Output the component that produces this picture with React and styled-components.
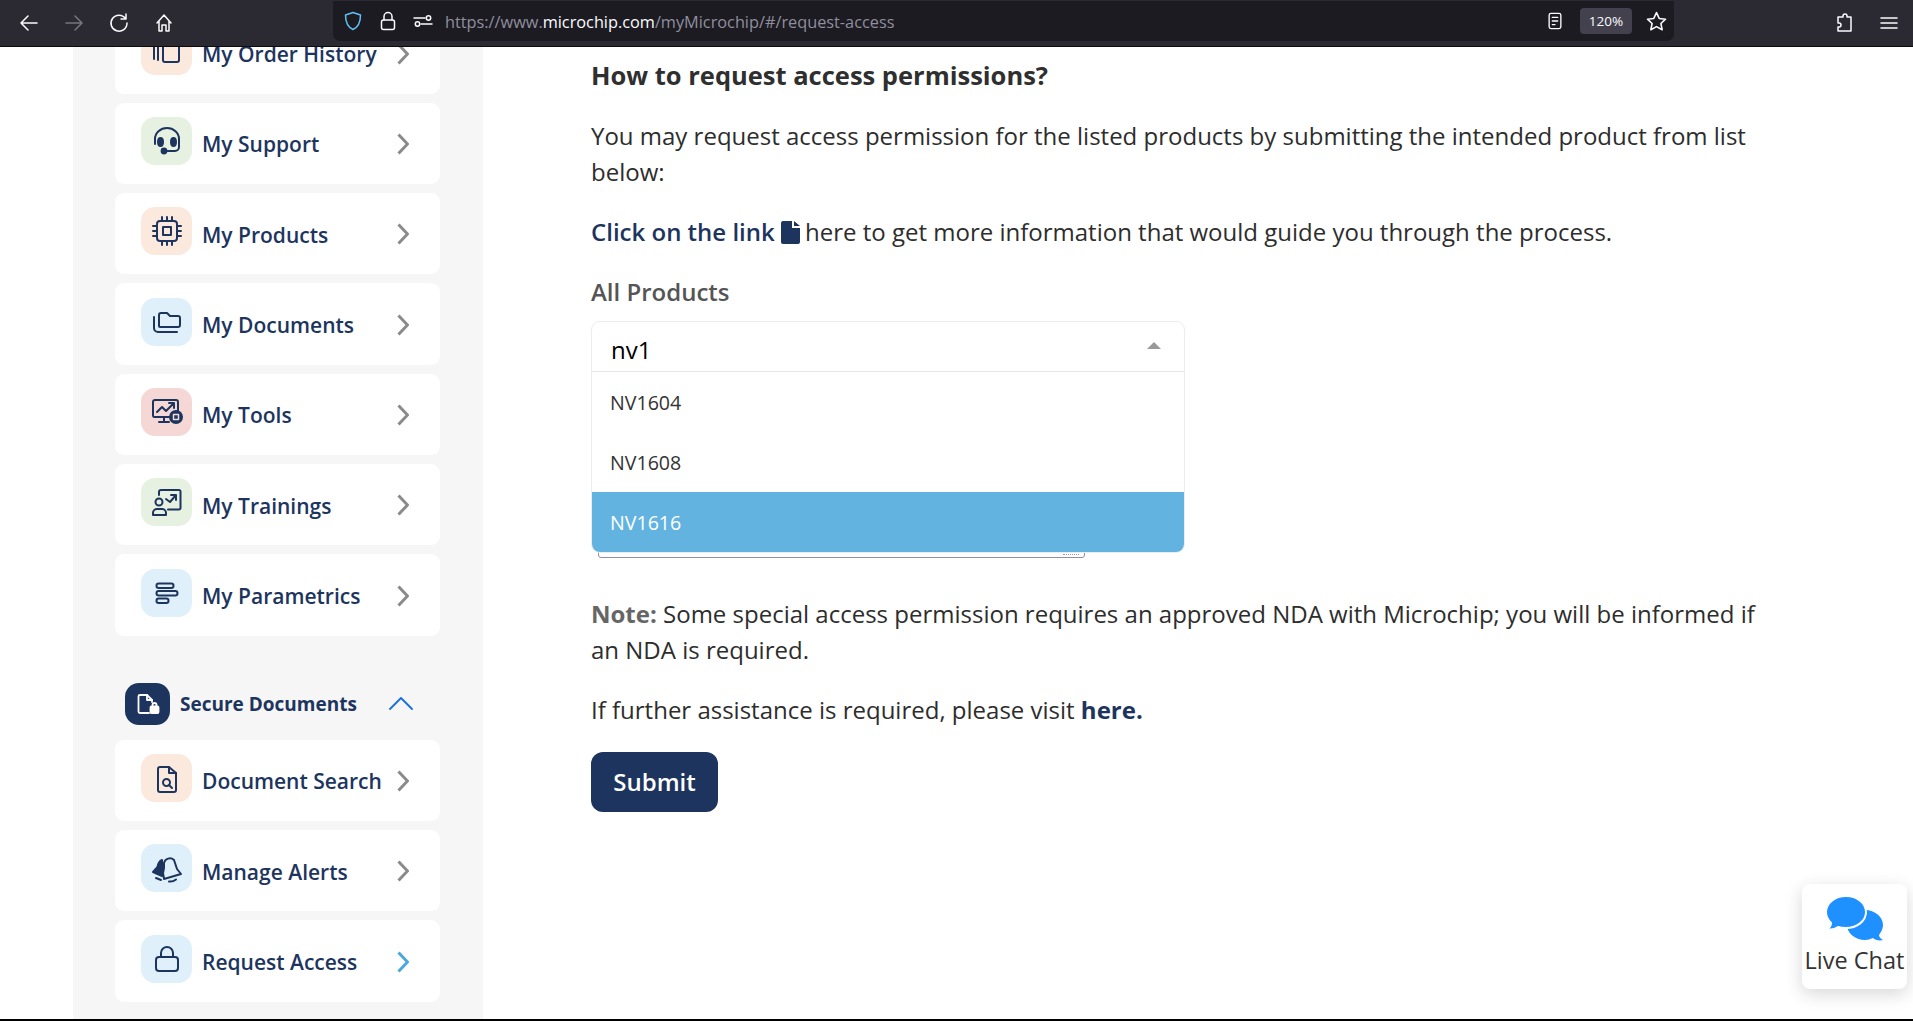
import React from 'react';
import styled, { createGlobalStyle } from 'styled-components';

const navy = '#1d355e';

const GlobalStyle = createGlobalStyle`
  html, body {
    margin: 0;
    padding: 0;
    height: 100%;
    overflow: hidden;
    background: #fff;
    font-family: "Open Sans", "Noto Sans", sans-serif;
  }
`;

const Frame = styled.div`
  display: flex;
  flex-direction: column;
  height: 1021px;
  position: relative;
  overflow: hidden;
`;

const Toolbar = styled.header`
  flex: none;
  height: 46px;
  border-bottom: 1px solid #0c0c0d;
  background: #2b2a33;
  display: flex;
  align-items: center;
  color: #fbfbfe;
`;

const NavButtons = styled.div`
  width: 333px;
  flex: none;
  display: flex;
  align-items: center;
  padding-left: 19px;
  gap: 25px;
  box-sizing: border-box;
`;

const UrlBar = styled.div`
  width: 1341px;
  height: 40px;
  margin-bottom: 4px;
  flex: none;
  background: #1c1b22;
  border-radius: 0 0 7px 7px;
  display: flex;
  align-items: center;
  padding: 0 7px 0 10px;
  box-sizing: border-box;
`;

const UrlGap = styled.span`
  width: 15px;
  flex: none;
`;

const UrlText = styled.div`
  flex: 1;
  margin-left: 12px;
  padding-top: 2px;
  font: 16.3px "Open Sans", sans-serif;
  color: #8f8f9d;
  white-space: nowrap;
  b {
    font-weight: 400;
    color: #fbfbfe;
  }
`;

const Zoom = styled.span`
  width: 52px;
  height: 26px;
  border-radius: 4px;
  background: #42414d;
  color: #fbfbfe;
  font: 13.5px "Open Sans", sans-serif;
  display: flex;
  align-items: center;
  justify-content: center;
  margin: 0 14px 0 16px;
`;

const RightTools = styled.div`
  flex: 1;
  display: flex;
  align-items: center;
  gap: 24px;
  padding-left: 161px;
`;

const Page = styled.div`
  flex: 1;
  min-height: 0;
  display: flex;
  overflow: hidden;
  border-bottom: 2px solid #000;
`;

const Sidebar = styled.aside`
  flex: none;
  width: 410px;
  margin-left: 73px;
  margin-top: -34.5px;
  padding: 0 43px 0 42px;
  box-sizing: border-box;
  background: #f6f6f6;
`;

const MenuList = styled.nav`
  display: flex;
  flex-direction: column;
  gap: 9px;
`;

const MenuCard = styled.a`
  height: 81.33px;
  border-radius: 9px;
  background: #fff;
  display: grid;
  grid-template-columns: 51px 1fr 12px;
  column-gap: 11px;
  padding: 0 31px 0 26px;
  box-sizing: border-box;
  align-items: center;
  color: ${navy};
`;

const Tile = styled.span`
  width: 51px;
  height: 48px;
  border-radius: 14px;
  background: ${p => p.$bg};
  display: flex;
  align-items: center;
  justify-content: center;
  margin-bottom: 5px;
`;

const MenuLabel = styled.span`
  font-size: 21px;
  font-weight: 600;
  white-space: nowrap;
  line-height: 28px;
  padding-top: 2px;
  margin-left: -1px;
`;

const Chevron = styled.svg`
  width: 12px;
  height: 22px;
  fill: none;
  stroke: ${p => (p.$active ? '#4aa8de' : '#8a8a8a')};
  stroke-width: 3;
  margin-top: 1px;
`;

const SectionHead = styled.div`
  display: flex;
  align-items: center;
  margin: 47px 0 15px 10px;
  height: 42px;
  color: ${navy};
`;

const SectionIcon = styled.span`
  width: 45px;
  height: 42px;
  border-radius: 14px;
  background: ${navy};
  display: flex;
  align-items: center;
  justify-content: center;
`;

const SectionTitle = styled.span`
  margin-left: 10px;
  font-size: 19px;
  font-weight: 700;
  white-space: nowrap;
  width: 209px;
`;

const Main = styled.main`
  flex: 1;
  min-width: 0;
  padding: 10px 0 0 108px;
  color: #2d2d2d;
  font-size: 24px;
  line-height: 36px;
`;

const Heading = styled.h2`
  margin: 0 0 25px;
  font-size: 25.5px;
  line-height: 36px;
  font-weight: 700;
  color: #2f2f2f;
`;

const Para = styled.p`
  margin: 0 0 ${p => p.$after || 24}px;
  width: 1190px;
  strong {
    color: ${navy};
    font-weight: ${p => p.$linkWeight || 700};
  }
  em {
    color: #666;
    font-style: normal;
    font-weight: 700;
  }
`;

const FieldLabel = styled.div`
  font-weight: 600;
  color: #555;
  margin-bottom: 11px;
`;

const SelectField = styled.div`
  position: relative;
  height: 236px;
  margin-bottom: 39px;
`;

const HiddenInput = styled.div`
  position: absolute;
  left: 7px;
  bottom: -1px;
  width: 487px;
  height: 40px;
  border: 1px solid #8f8f9d;
  border-radius: 3px;
  box-sizing: border-box;
  &::after {
    content: '';
    position: absolute;
    right: 5px;
    bottom: 2px;
    width: 16px;
    border-bottom: 1px dotted #999;
  }
`;

const Dropdown = styled.div`
  position: absolute;
  top: 0;
  left: 0;
  width: 594px;
  box-sizing: border-box;
  border: 1px solid #ececec;
  border-radius: 9px;
  background: #fff;
  overflow: hidden;
`;

const SearchRow = styled.div`
  height: 50px;
  padding: 7px 23px 0 19px;
  box-sizing: border-box;
  border-bottom: 1px solid #e6e6e6;
  display: flex;
  align-items: center;
  justify-content: space-between;
  color: #000;
  font-size: 24px;
`;

const Caret = styled.span`
  width: 0;
  height: 0;
  border-left: 7px solid transparent;
  border-right: 7px solid transparent;
  border-bottom: 7px solid #999;
  margin-bottom: 9px;
`;

const Option = styled.div`
  height: 60px;
  padding: 2px 0 0 18px;
  box-sizing: border-box;
  display: flex;
  align-items: center;
  font-size: 19.6px;
  color: ${p => (p.$selected ? '#fff' : '#333')};
  background: ${p => (p.$selected ? '#63b3e1' : '#fff')};
`;

const SubmitButton = styled.button`
  display: block;
  width: 127px;
  height: 60px;
  padding: 0 0 2px;
  border: 0;
  border-radius: 12px;
  background: ${navy};
  color: #fff;
  font: 600 24px "Open Sans", sans-serif;
`;

const ChatWidget = styled.div`
  position: absolute;
  left: 1802px;
  top: 884px;
  width: 105px;
  height: 105px;
  background: #fff;
  border-radius: 8px;
  box-shadow: 0 5px 18px rgba(0, 0, 0, 0.16);
  display: flex;
  flex-direction: column;
  align-items: center;
  color: #333;
  font-size: 23.5px;
  line-height: 32px;
  white-space: nowrap;
`;

const ChatBubbles = styled.svg`
  display: block;
  flex: none;
  margin-top: 10px;
`;

const Glyph = styled.svg`
  display: block;
  flex: none;
  fill: none;
  stroke: ${p => p.$stroke || navy};
  stroke-width: ${p => p.$w || 2};
  stroke-linecap: round;
  stroke-linejoin: round;
`;

const InlineFile = styled.svg`
  display: inline-block;
  vertical-align: -3px;
  margin: 0 5px 0 0;
`;

const Icon = ({ size = 32, children, stroke, w, view = 32 }) => (
  <Glyph width={size} height={size} viewBox={`0 0 ${view} ${view}`} $stroke={stroke} $w={w}>
    {children}
  </Glyph>
);

const TB = ({ size = 20, children, stroke = '#fbfbfe', w = 1.5 }) => (
  <Icon size={size} view={20} stroke={stroke} w={w}>
    {children}
  </Icon>
);

const icons = {
  history: (
    <Icon>
      <path d="M3 5v19M7 5v20" />
      <rect x="12" y="5" width="16" height="22" rx="2" />
    </Icon>
  ),
  support: (
    <Icon>
      <path d="M4 19v-5a12 11 0 0 1 24 0v8a4 4 0 0 1-4 4h-9" />
      <ellipse cx="9.5" cy="17" rx="2.5" ry="4" fill={navy} />
      <ellipse cx="22.5" cy="17" rx="2.5" ry="4" fill={navy} />
      <circle cx="13" cy="26" r="2.4" fill={navy} />
    </Icon>
  ),
  chip: (
    <Icon>
      <rect x="6" y="6" width="20" height="20" rx="3" />
      <rect x="12" y="12" width="8" height="8" />
      <path d="M11 2v4M16 2v4M21 2v4M11 26v4M16 26v4M21 26v4M2 11h4M2 16h4M2 21h4M26 11h4M26 16h4M26 21h4" />
    </Icon>
  ),
  folder: (
    <Icon>
      <path d="M8 20V9a2 2 0 0 1 2-2h6l3 3h8a2 2 0 0 1 2 2v7a2 2 0 0 1-2 2H9a1 1 0 0 1-1-1z" />
      <path d="M3 11v11a4 4 0 0 0 4 4h19" />
    </Icon>
  ),
  tools: (
    <Icon>
      <path d="M21 21H3a1.5 1.5 0 0 1-1-1.500V6a2 2 0 0 1 2-2h21a2 2 0 0 1 2 2v9" />
      <path d="M13 21v5M8 26h10" />
      <path d="M6 16l5-5 4 4 7-7M18 7h5v5" />
      <circle cx="25" cy="21" r="6" fill={navy} />
      <rect x="22.500" y="18.500" width="5" height="5" stroke="#f5d8d5" strokeWidth="1.500" />
    </Icon>
  ),
  training: (
    <Icon>
      <circle cx="8" cy="16" r="3.500" />
      <path d="M2 29v-2a4 4 0 0 1 4-4h5a4 4 0 0 1 4 4v2z" />
      <path d="M8 9V6a2 2 0 0 1 2-2h18a1.500 1.500 0 0 1 1.500 1.500V22a1.500 1.500 0 0 1-1.500 1.500H17" />
      <path d="M15 13l4 3 6-7M20 9h5v5" />
    </Icon>
  ),
  params: (
    <Icon>
      <rect x="5.500" y="6.500" width="17" height="4.500" rx="2.200" />
      <rect x="5.500" y="14" width="21" height="4.500" rx="2.200" />
      <rect x="5.500" y="21.500" width="12" height="4.500" rx="2.200" />
    </Icon>
  ),
  docSearch: (
    <Icon>
      <path d="M9 5h9l7 6v17a2 2 0 0 1-2 2H9a2 2 0 0 1-2-2V7a2 2 0 0 1 2-2z" />
      <path d="M18 5v6h7" />
      <circle cx="15.500" cy="20.500" r="3.500" />
      <path d="M18 23l3 3" />
    </Icon>
  ),
  alerts: (
    <Icon>
      <path d="M11 8C8 9 7 12 6.500 15L2 20l9 4z" fill={navy} />
      <path d="M5 26l5 2" />
      <path d="M13 11a6 6 0 0 1 10-3l3 9 4 5-17 5-1-6 1-5z" fill="#dff0fa" />
      <path d="M18 29.500q4 .5 7-2" />
    </Icon>
  ),
  lock: (
    <Icon>
      <rect x="5" y="14" width="22" height="14" rx="3" />
      <path d="M10 14V10a6 6 0 0 1 12 0v4" />
    </Icon>
  ),
};

const mainItems = [
  { label: 'My Order History', icon: 'history', bg: '#fbe9dd' },
  { label: 'My Support', icon: 'support', bg: '#e7f1e1' },
  { label: 'My Products', icon: 'chip', bg: '#fbe9dd' },
  { label: 'My Documents', icon: 'folder', bg: '#dff0fa' },
  { label: 'My Tools', icon: 'tools', bg: '#f5d8d5' },
  { label: 'My Trainings', icon: 'training', bg: '#e7f1e1' },
  { label: 'My Parametrics', icon: 'params', bg: '#dff0fa' },
];

const secureItems = [
  { label: 'Document Search', icon: 'docSearch', bg: '#fbe9dd' },
  { label: 'Manage Alerts', icon: 'alerts', bg: '#dff0fa' },
  { label: 'Request Access', icon: 'lock', bg: '#dff0fa', active: true },
];

const MenuItem = ({ item }) => (
  <MenuCard>
    <Tile $bg={item.bg}>{icons[item.icon]}</Tile>
    <MenuLabel>{item.label}</MenuLabel>
    <Chevron viewBox="0 0 12 22" $active={item.active}>
      <path d="M1.500 1.500L10.500 11L1.500 20.500" />
    </Chevron>
  </MenuCard>
);

const App = () => (
  <Frame>
    <GlobalStyle />
    <Toolbar>
      <NavButtons>
        <TB>
          <path d="M18 10H2M9 3l-7 7 7 7" />
        </TB>
        <TB stroke="#77767e">
          <path d="M2 10h16M11 3l7 7-7 7" />
        </TB>
        <TB>
          <path d="M16.500 5.500A8 8 0 1 0 18 10M17 1v5h-5" />
        </TB>
        <TB>
          <path d="M3 10l7-8 7 8M5 8v10h3v-6h4v6h3V8" />
        </TB>
      </NavButtons>
      <UrlBar>
        <TB size={20} stroke="#5dc1f5">
          <path d="M10 1.500l7.500 2.500c0 7-2 12-7.500 14.500C4.500 16 2.500 11 2.500 4z" />
        </TB>
        <UrlGap />
        <TB size={20}>
          <rect x="3.500" y="9" width="13" height="9.500" rx="2" />
          <path d="M6 9V5.500a4 4 0 0 1 8 0V9" />
        </TB>
        <UrlGap />
        <TB size={20}>
          <path d="M1 7h11M8 13h11" />
          <circle cx="15.500" cy="7" r="2.200" />
          <circle cx="4.500" cy="13" r="2.200" />
        </TB>
        <UrlText>
          https://www.<b>microchip.com</b>/myMicrochip/#/request-access
        </UrlText>
        <TB size={18}>
          <rect x="3.500" y="1.500" width="13" height="17" rx="2" />
          <path d="M7 6h6M7 10h6M7 14h3" />
        </TB>
        <Zoom>120%</Zoom>
        <TB size={21}>
          <path d="M10 1.500l2.600 5.600 6 .7-4.400 4.100 1.200 6-5.400-3-5.400 3 1.200-6L1.400 7.800l6-.7z" />
        </TB>
      </UrlBar>
      <RightTools>
        <TB size={20}>
          <path d="M3 4h5V3a2 2 0 0 1 4 0v1h4v14H3v-4h1a2 2 0 0 0 0-4H3z" />
        </TB>
        <TB size={20}>
          <path d="M2 5h16M2 10h16M2 15h16" />
        </TB>
      </RightTools>
    </Toolbar>
    <Page>
      <Sidebar>
        <MenuList>
          {mainItems.map(item => (
            <MenuItem key={item.label} item={item} />
          ))}
        </MenuList>
        <SectionHead>
          <SectionIcon>
            <Icon size={30} view={30} stroke="#fff" w={1.800}>
              <path d="M16 24H7a1.500 1.500 0 0 1-1.500-1.500v-15A1.500 1.500 0 0 1 7 6h7l5 5v2" />
              <path d="M14 6v5h5" />
              <rect x="17.500" y="17.500" width="8" height="6.500" rx="1" fill="#fff" />
              <path d="M19.500 17.500V16a2 2 0 0 1 4 0v1.500" />
            </Icon>
          </SectionIcon>
          <SectionTitle>Secure Documents</SectionTitle>
          <Icon size={24} view={24} stroke="#1a6fe0" w={1.800}>
            <path d="M1 17L12 6l11 11" />
          </Icon>
        </SectionHead>
        <MenuList>
          {secureItems.map(item => (
            <MenuItem key={item.label} item={item} />
          ))}
        </MenuList>
      </Sidebar>
      <Main>
        <Heading>How to request access permissions?</Heading>
        <Para>
          You may request access permission for the listed products by submitting the intended
          product from list below:
        </Para>
        <Para $linkWeight={600}>
          <strong>Click on the link </strong>
          <InlineFile width="19" height="23" viewBox="0 0 19 23">
            <path
              d="M2 0h9v7h8v14a2 2 0 0 1-2 2H2a2 2 0 0 1-2-2V2a2 2 0 0 1 2-2zM13 0l6 5h-6z"
              fill={navy}
            />
          </InlineFile>
          here to get more information that would guide you through the process.
        </Para>
        <FieldLabel>All Products</FieldLabel>
        <SelectField>
          <HiddenInput />
          <Dropdown>
            <SearchRow>
              nv1
              <Caret />
            </SearchRow>
            <Option>NV1604</Option>
            <Option>NV1608</Option>
            <Option $selected>NV1616</Option>
          </Dropdown>
        </SelectField>
        <Para>
          <em>Note:</em> Some special access permission requires an approved NDA with Microchip;
          you will be informed if an NDA is required.
        </Para>
        <Para>
          If further assistance is required, please visit <strong>here.</strong>
        </Para>
        <SubmitButton>Submit</SubmitButton>
      </Main>
    </Page>
    <ChatWidget>
      <ChatBubbles width="60" height="50" viewBox="0 0 60 50">
        <path
          d="M40 16c10 0 18 7 18 15 0 4-2 7-4 10 0 2 2 4 4 5-4 1-8 0-10-2-3 1-5 2-8 2-10 0-18-7-18-15s8-15 18-15z"
          fill="#1e90ff"
        />
        <path
          d="M21 2c11 0 20 7 20 16s-9 16-20 16c-3 0-5 0-8-1-3 2-7 3-11 2 2-1 4-3 4-6-3-3-5-7-5-11C1 9 10 2 21 2z"
          fill="#1e90ff"
          stroke="#fff"
          strokeWidth="2"
        />
      </ChatBubbles>
      Live Chat
    </ChatWidget>
  </Frame>
);

export default App;
